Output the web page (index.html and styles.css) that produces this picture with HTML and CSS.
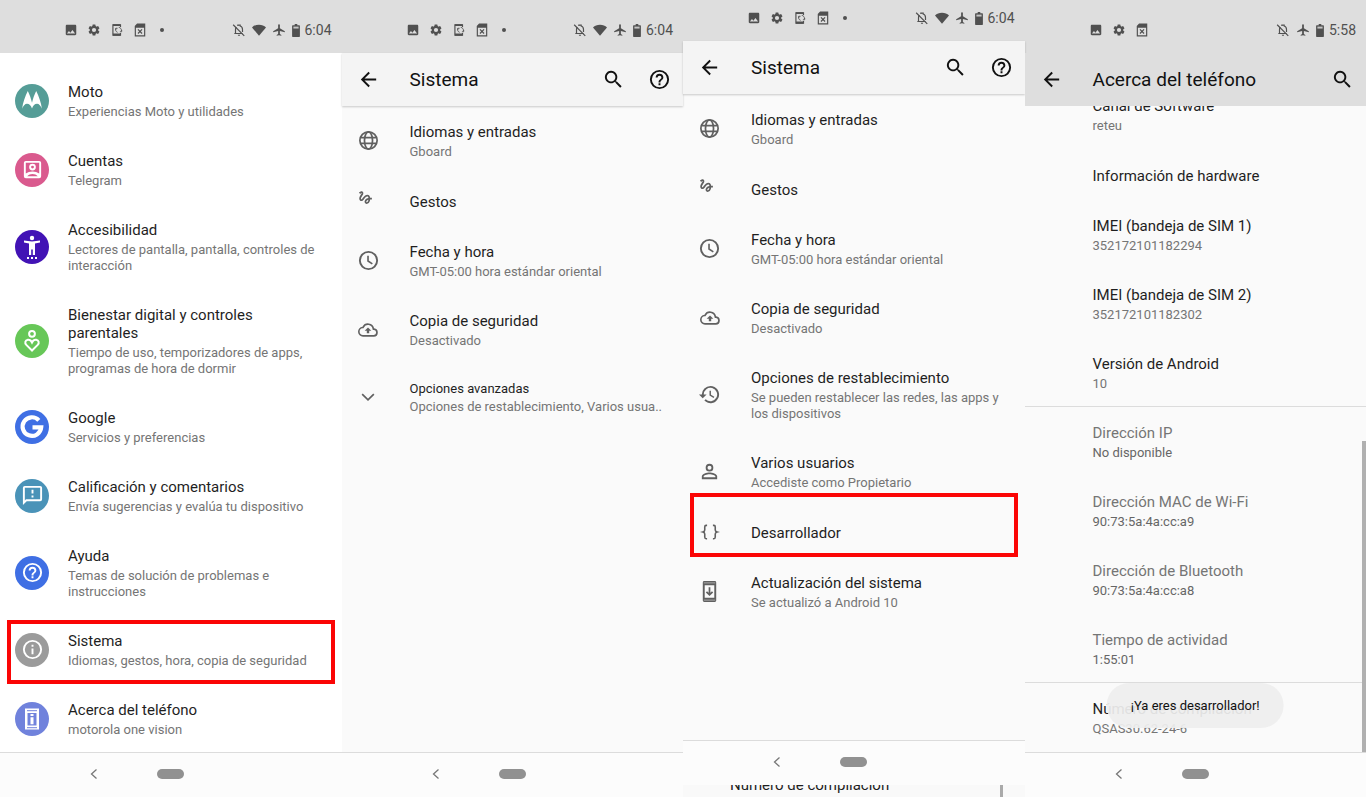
FILE: index.html
```
<!DOCTYPE html>
<html lang="es">
<head>
    <meta charset="UTF-8">
    <meta name="viewport" content="width=device-width, initial-scale=1">
    <title>Ajustes - Sistema</title>
    <link rel="stylesheet" href="styles.css">
</head>
<body>
    <!-- icon set -->
    <svg class="sprite" aria-hidden="true">
        <symbol id="i-image" viewBox="0 0 24 24"><path d="M21 19V5c0-1.100-.9-2-2-2H5c-1.100 0-2 .9-2 2v14c0 1.100.9 2 2 2h14c1.100 0 2-.9 2-2zM8.500 13.500l2.500 3 3.500-4.500 4.500 6H5z"/></symbol>
        <symbol id="i-gear" viewBox="0 0 24 24"><path d="M19.140 12.940c.04-.3.060-.61.060-.94s-.02-.64-.07-.94l2.030-1.580a.49.49 0 0 0 .12-.61l-1.920-3.320a.49.49 0 0 0-.59-.22l-2.390.96c-.5-.38-1.030-.7-1.620-.94l-.36-2.540a.48.48 0 0 0-.48-.41h-3.840c-.24 0-.43.17-.47.41l-.36 2.540c-.59.24-1.130.57-1.620.94l-2.390-.96a.49.49 0 0 0-.59.22L2.740 8.870c-.12.21-.08.47.12.61l2.030 1.580c-.05.3-.09.63-.09.94s.02.64.07.94l-2.030 1.580a.49.49 0 0 0-.12.61l1.920 3.320c.12.22.37.29.59.22l2.390-.96c.5.38 1.030.7 1.620.94l.36 2.540c.05.24.24.41.48.41h3.840c.24 0 .44-.17.47-.41l.36-2.540c.59-.24 1.130-.56 1.620-.94l2.390.96c.22.08.47 0 .59-.22l1.920-3.320a.49.49 0 0 0-.12-.61zM12 15.600a3.600 3.600 0 1 1 0-7.200 3.600 3.600 0 0 1 0 7.200z"/></symbol>
        <symbol id="i-sync-phone" viewBox="0 0 24 24"><path d="M18 7V3H5v18h13v-4" fill="none" stroke="currentColor" stroke-width="2"/><path d="M5 2h13v3H5zM5 18h13v4H5z"/><path d="M10 9a5 5 0 0 0 3 7M10 9v3M10 9h3M15 7.500a5 5 0 0 1 4.500 6M20 15v-3M20 15h-3" fill="none" stroke="currentColor" stroke-width="1.500"/></symbol>
        <symbol id="i-file-x" viewBox="0 0 24 24"><path d="M3 5l4-4h14v22H3zM5 8v13h14V8z" fill-rule="evenodd"/><path d="M8.500 11l7 7M15.500 11l-7 7" stroke="currentColor" stroke-width="2"/></symbol>
        <symbol id="i-bell-off" viewBox="0 0 24 24"><path d="M6 18V11c0-1.600.5-2.900 1.300-4M10 5.200V3.500h4v1.700c2.500.8 4 3 4 5.800v4.500M4 18h14" fill="none" stroke="currentColor" stroke-width="2"/><path d="M10 20h4a2 2 0 0 1-4 0z"/><path d="M2 3l19 19" stroke="currentColor" stroke-width="2"/></symbol>
        <symbol id="i-wifi" viewBox="0 0 24 24"><path d="M12 22L0 7.500C3 4.500 7 3 12 3s9 1.500 12 4.500z"/></symbol>
        <symbol id="i-plane" viewBox="0 0 24 24"><path d="M22 16v-2l-8.500-5V3.500a1.500 1.500 0 0 0-3 0V9L2 14v2l8.500-2.500V19L8 20.500V22l4-1 4 1v-1.500L13.500 19v-5.500z"/></symbol>
        <symbol id="i-battery" viewBox="0 0 12 20"><path d="M4 0h4v2h3a1 1 0 0 1 1 1v16a1 1 0 0 1-1 1H1a1 1 0 0 1-1-1V3a1 1 0 0 1 1-1h3z"/><path d="M2 4h8v3H2z" fill="#c4c4c4"/></symbol>
        <symbol id="i-back" viewBox="0 0 24 24"><path d="M20 11H7.830l5.590-5.590L12 4l-8 8 8 8 1.410-1.410L7.830 13H20z"/></symbol>
        <symbol id="i-search" viewBox="0 0 24 24"><path d="M15.500 14h-.79l-.28-.27a6.500 6.500 0 1 0-.7.700l.27.280v.79l5 4.990L20.490 19zm-6 0a4.500 4.500 0 1 1 0-9 4.500 4.500 0 0 1 0 9z"/></symbol>
        <symbol id="i-help" viewBox="0 0 24 24"><path d="M11 18h2v-2h-2zm1-16a10 10 0 1 0 0 20 10 10 0 0 0 0-20zm0 18a8 8 0 1 1 0-16 8 8 0 0 1 0 16zm0-14a4 4 0 0 0-4 4h2a2 2 0 0 1 4 0c0 2-3 1.750-3 5h2c0-2.250 3-2.500 3-5a4 4 0 0 0-4-4z"/></symbol>
        <symbol id="i-info" viewBox="0 0 24 24"><path d="M11 7h2v2h-2zm0 4h2v6h-2zm1-9a10 10 0 1 0 0 20 10 10 0 0 0 0-20zm0 18a8 8 0 1 1 0-16 8 8 0 0 1 0 16z"/></symbol>
        <symbol id="i-globe" viewBox="0 0 24 24"><g fill="none" stroke="currentColor" stroke-width="1.800"><circle cx="12" cy="12" r="9"/><ellipse cx="12" cy="12" rx="4.200" ry="9"/><path d="M3.500 9h17M3.500 15h17"/></g></symbol>
        <symbol id="i-gesture" viewBox="0 0 24 24"><path transform="scale(.74)" d="M4.590 6.890c.7-.71 1.400-1.350 1.710-1.220.5.200 0 1.030-.3 1.520-.25.42-2.860 3.890-2.860 6.310 0 1.280.48 2.340 1.340 2.980.75.56 1.740.73 2.640.46 1.070-.31 1.950-1.400 3.060-2.770 1.210-1.490 2.830-3.440 4.080-3.440 1.630 0 1.650 1.010 1.760 1.790-3.780.64-5.380 3.670-5.380 5.370 0 1.700 1.440 3.090 3.210 3.090 1.630 0 4.290-1.330 4.690-6.100H21v-2.500h-2.470c-.15-1.650-1.090-4.200-4.030-4.200-2.250 0-4.180 1.910-4.940 2.840-.58.73-2.060 2.480-2.290 2.720-.25.3-.68.84-1.110.84-.45 0-.72-.83-.36-1.920.35-1.090 1.400-2.860 1.850-3.520.78-1.140 1.300-1.920 1.300-3.280C8.950 3.690 7.310 3 6.440 3 5.120 3 3.970 4 3.720 4.250c-.36.36-.66.66-.88.93zm9.290 11.660c-.31 0-.74-.26-.74-.72 0-.6.73-2.200 2.870-2.760-.3 2.690-1.430 3.480-2.130 3.480z"/></symbol>
        <symbol id="i-clock" viewBox="0 0 24 24"><circle cx="12" cy="12" r="9" fill="none" stroke="currentColor" stroke-width="2"/><path d="M11.500 7v5.500l4.500 3" fill="none" stroke="currentColor" stroke-width="1.700"/></symbol>
        <symbol id="i-cloud" viewBox="0 0 24 24"><path d="M19.350 10.040a7.490 7.490 0 0 0-14-2A6 6 0 0 0 6 20h13a5 5 0 0 0 .35-9.960zM19 18H6a4 4 0 0 1-.44-7.980l1.070-.11.5-.95a5.490 5.490 0 0 1 10.260 1.470l.3 1.500 1.530.11A3 3 0 0 1 19 18zM8 13h2.550v3h2.900v-3H16l-4-4z"/></symbol>
        <symbol id="i-chevron" viewBox="0 0 24 24"><path d="M5 8.500l7 7 7-7" fill="none" stroke="currentColor" stroke-width="2"/></symbol>
        <symbol id="i-restore" viewBox="0 0 24 24"><path d="M13 3a9 9 0 0 0-9 9H1l3.890 3.890.07.14L9 12H6a7 7 0 1 1 2.060 4.940l-1.420 1.420A9 9 0 1 0 13 3zm-1 5v5l4.280 2.540.72-1.210-3.500-2.080V8z"/></symbol>
        <symbol id="i-user" viewBox="0 0 24 24"><path d="M12 5.900a2.100 2.100 0 1 1 0 4.200 2.100 2.100 0 0 1 0-4.200m0 9c2.970 0 6.100 1.460 6.100 2.100v1.100H5.900V17c0-.64 3.130-2.100 6.100-2.100M12 4a4 4 0 1 0 0 8 4 4 0 0 0 0-8zm0 9c-2.670 0-8 1.340-8 4v3h16v-3c0-2.660-5.330-4-8-4z"/></symbol>
        <symbol id="i-braces" viewBox="0 0 24 24"><path d="M8.500 4H7.300C6 4 5.700 4.700 5.700 6v3.500c0 1.500-.8 2.100-2.200 2.500 1.400.4 2.200 1 2.200 2.500V18c0 1.300.3 2 1.600 2h1.200M15.500 4h1.200c1.300 0 1.600.7 1.600 2v3.500c0 1.500.8 2.100 2.200 2.500-1.400.4-2.200 1-2.200 2.500V18c0 1.300-.3 2-1.600 2h-1.200" fill="none" stroke="currentColor" stroke-width="1.900"/></symbol>
        <symbol id="i-update" viewBox="0 0 24 24"><path d="M6.500 1h11A1.500 1.500 0 0 1 19 2.500v19a1.500 1.500 0 0 1-1.500 1.500h-11A1.500 1.500 0 0 1 5 21.500v-19A1.500 1.500 0 0 1 6.500 1zM7 5.500v13h10v-13z" fill-rule="evenodd"/><path d="M6 3h12M6 21h12" stroke="#ccc" stroke-width=".7"/><path d="M12 7.500v8M8.800 12.300l3.200 3.200 3.200-3.200" fill="none" stroke="currentColor" stroke-width="1.800"/></symbol>
        <symbol id="i-nav-back" viewBox="0 0 12 12"><path d="M8.500 1.500L3.500 6l5 4.500" fill="none" stroke="currentColor" stroke-width="1.300"/></symbol>
        <symbol id="i-moto" viewBox="0 0 34 34"><path d="M12.800 7c1.700 3.200 3.300 7.800 4.200 11.800.9-4 2.500-8.600 4.200-11.800 2.600 5.200 4.900 11.500 5.700 17.700-1.100-3-2.900-5-4.900-5-2.200 0-4 1.900-5 4.800-1-2.900-2.800-4.800-5-4.800-2 0-3.800 2-4.900 5C7.900 18.500 10.200 12.200 12.800 7z"/></symbol>
        <symbol id="i-account" viewBox="0 0 24 24"><path d="M5 3h14a2 2 0 0 1 2 2v14a2 2 0 0 1-2 2H5a2 2 0 0 1-2-2V5a2 2 0 0 1 2-2zm0 2v11.200c2-1.500 4.200-2.200 7-2.200s5 .7 7 2.200V5zm1.500 14h11c-1.500-1.500-3.300-2.200-5.500-2.200s-4 .7-5.500 2.200z" fill-rule="evenodd"/><circle cx="12" cy="9.500" r="2.500" fill="none" stroke="currentColor" stroke-width="2"/></symbol>
        <symbol id="i-access" viewBox="0 0 34 34"><circle cx="17" cy="8" r="2.200"/><path d="M9 10.500l8 1 8-1v2l-5 .9V25h-2.200v-5.500h-1.600V25H14V13.400l-5-.9zM12 27h2v2h-2zM16 27h2v2h-2zM20 27h2v2h-2z"/></symbol>
        <symbol id="i-wellbeing" viewBox="0 0 34 34"><g fill="none" stroke="currentColor" stroke-width="2"><circle cx="17" cy="9.800" r="2.900"/><path d="M17 26.500l-5.700-5.600c-1.800-1.800-1.200-4.700 1.500-5.100 1.800-.2 3.300.8 4.200 2.700.9-1.900 2.400-2.900 4.200-2.700 2.700.4 3.300 3.300 1.500 5.100z"/></g></symbol>
        <symbol id="i-google" viewBox="0 0 34 34"><path d="M23.800 10.300A9.300 9.300 0 1 0 26.200 17.400H17.500" fill="none" stroke="currentColor" stroke-width="4.200"/></symbol>
        <symbol id="i-feedback" viewBox="0 0 24 24"><path d="M20 2H4a2 2 0 0 0-2 2v18l4-4h14a2 2 0 0 0 2-2V4a2 2 0 0 0-2-2zm0 14H5.170L4 17.170V4h16zM11 12h2v2h-2zm0-6h2v4h-2z"/></symbol>
        <symbol id="i-about" viewBox="0 0 34 34"><path d="M10 6.500h14v21H10zM12.500 11v12.500h9V11z" fill-rule="evenodd"/><path d="M12 8.700h10M12 25.700h10" stroke="#7082dc"/><path d="M15.500 12h3v2h-3zM15.500 15.300h3v7h-3z"/></symbol>
    </svg>

    <main class="screens">

        <!-- Ajustes -->
        <section class="phone phone-main">
            <div class="status">
                <svg class="st-icon"><use href="#i-image"/></svg>
                <svg class="st-icon"><use href="#i-gear"/></svg>
                <svg class="st-icon"><use href="#i-sync-phone"/></svg>
                <svg class="st-icon"><use href="#i-file-x"/></svg>
                <span class="st-dot"></span>
                <div class="st-right">
                    <svg class="st-icon"><use href="#i-bell-off"/></svg>
                    <svg class="st-icon"><use href="#i-wifi"/></svg>
                    <svg class="st-icon"><use href="#i-plane"/></svg>
                    <svg class="st-battery"><use href="#i-battery"/></svg>
                    <span class="st-time">6:04</span>
                </div>
            </div>
            <ul class="list list-scrolled">
                <li><a class="row" href="#">
                    <span class="avatar moto"><svg class="full"><use href="#i-moto"/></svg></span>
                    <span class="text"><span class="title">Moto</span><span class="sub">Experiencias Moto y utilidades</span></span>
                </a></li>
                <li><a class="row" href="#">
                    <span class="avatar accounts"><svg class="icon"><use href="#i-account"/></svg></span>
                    <span class="text"><span class="title">Cuentas</span><span class="sub">Telegram</span></span>
                </a></li>
                <li><a class="row" href="#">
                    <span class="avatar access"><svg class="full"><use href="#i-access"/></svg></span>
                    <span class="text"><span class="title">Accesibilidad</span><span class="sub">Lectores de pantalla, pantalla, controles de interacción</span></span>
                </a></li>
                <li><a class="row" href="#">
                    <span class="avatar wellbeing"><svg class="full"><use href="#i-wellbeing"/></svg></span>
                    <span class="text"><span class="title">Bienestar digital y controles parentales</span><span class="sub">Tiempo de uso, temporizadores de apps, programas de hora de dormir</span></span>
                </a></li>
                <li><a class="row" href="#">
                    <span class="avatar google"><svg class="full"><use href="#i-google"/></svg></span>
                    <span class="text"><span class="title">Google</span><span class="sub">Servicios y preferencias</span></span>
                </a></li>
                <li><a class="row" href="#">
                    <span class="avatar feedback"><svg class="icon"><use href="#i-feedback"/></svg></span>
                    <span class="text"><span class="title">Calificación y comentarios</span><span class="sub">Envía sugerencias y evalúa tu dispositivo</span></span>
                </a></li>
                <li><a class="row" href="#">
                    <span class="avatar help"><svg class="icon"><use href="#i-help"/></svg></span>
                    <span class="text"><span class="title">Ayuda</span><span class="sub">Temas de solución de problemas e instrucciones</span></span>
                </a></li>
                <li><a class="row marked" href="#">
                    <span class="avatar system"><svg class="icon"><use href="#i-info"/></svg></span>
                    <span class="text"><span class="title">Sistema</span><span class="sub">Idiomas, gestos, hora, copia de seguridad</span></span>
                </a></li>
                <li><a class="row" href="#">
                    <span class="avatar about"><svg class="full"><use href="#i-about"/></svg></span>
                    <span class="text"><span class="title">Acerca del teléfono</span><span class="sub">motorola one vision</span></span>
                </a></li>
            </ul>
            <nav class="navbar">
                <button class="nav-back" aria-label="Atrás"><svg><use href="#i-nav-back"/></svg></button>
                <button class="nav-home" aria-label="Inicio"></button>
            </nav>
        </section>

        <!-- Sistema -->
        <section class="phone">
            <div class="status">
                <svg class="st-icon"><use href="#i-image"/></svg>
                <svg class="st-icon"><use href="#i-gear"/></svg>
                <svg class="st-icon"><use href="#i-sync-phone"/></svg>
                <svg class="st-icon"><use href="#i-file-x"/></svg>
                <span class="st-dot"></span>
                <div class="st-right">
                    <svg class="st-icon"><use href="#i-bell-off"/></svg>
                    <svg class="st-icon"><use href="#i-wifi"/></svg>
                    <svg class="st-icon"><use href="#i-plane"/></svg>
                    <svg class="st-battery"><use href="#i-battery"/></svg>
                    <span class="st-time">6:04</span>
                </div>
            </div>
            <header class="appbar">
                <button class="tool tool-back" aria-label="Atrás"><svg class="icon"><use href="#i-back"/></svg></button>
                <h1>Sistema</h1>
                <button class="tool" aria-label="Buscar"><svg class="icon"><use href="#i-search"/></svg></button>
                <button class="tool" aria-label="Ayuda"><svg class="icon"><use href="#i-help"/></svg></button>
            </header>
            <ul class="list">
                <li><a class="row" href="#">
                    <span class="glyph"><svg class="icon"><use href="#i-globe"/></svg></span>
                    <span class="text"><span class="title">Idiomas y entradas</span><span class="sub">Gboard</span></span>
                </a></li>
                <li><a class="row" href="#">
                    <span class="glyph"><svg class="icon"><use href="#i-gesture"/></svg></span>
                    <span class="text"><span class="title">Gestos</span></span>
                </a></li>
                <li><a class="row" href="#">
                    <span class="glyph"><svg class="icon"><use href="#i-clock"/></svg></span>
                    <span class="text"><span class="title">Fecha y hora</span><span class="sub">GMT-05:00 hora estándar oriental</span></span>
                </a></li>
                <li><a class="row" href="#">
                    <span class="glyph"><svg class="icon-small"><use href="#i-cloud"/></svg></span>
                    <span class="text"><span class="title">Copia de seguridad</span><span class="sub">Desactivado</span></span>
                </a></li>
                <li><button class="row row-more">
                    <span class="glyph"><svg class="icon-small"><use href="#i-chevron"/></svg></span>
                    <span class="text"><span class="title">Opciones avanzadas</span><span class="sub">Opciones de restablecimiento, Varios usua..</span></span>
                </button></li>
            </ul>
            <nav class="navbar">
                <button class="nav-back" aria-label="Atrás"><svg><use href="#i-nav-back"/></svg></button>
                <button class="nav-home" aria-label="Inicio"></button>
            </nav>
        </section>

        <!-- Sistema, opciones avanzadas -->
        <section class="phone">
            <div class="status status-short">
                <svg class="st-icon"><use href="#i-image"/></svg>
                <svg class="st-icon"><use href="#i-gear"/></svg>
                <svg class="st-icon"><use href="#i-sync-phone"/></svg>
                <svg class="st-icon"><use href="#i-file-x"/></svg>
                <span class="st-dot"></span>
                <div class="st-right">
                    <svg class="st-icon"><use href="#i-bell-off"/></svg>
                    <svg class="st-icon"><use href="#i-wifi"/></svg>
                    <svg class="st-icon"><use href="#i-plane"/></svg>
                    <svg class="st-battery"><use href="#i-battery"/></svg>
                    <span class="st-time">6:04</span>
                </div>
            </div>
            <header class="appbar">
                <button class="tool tool-back" aria-label="Atrás"><svg class="icon"><use href="#i-back"/></svg></button>
                <h1>Sistema</h1>
                <button class="tool" aria-label="Buscar"><svg class="icon"><use href="#i-search"/></svg></button>
                <button class="tool" aria-label="Ayuda"><svg class="icon"><use href="#i-help"/></svg></button>
            </header>
            <ul class="list">
                <li><a class="row" href="#">
                    <span class="glyph"><svg class="icon"><use href="#i-globe"/></svg></span>
                    <span class="text"><span class="title">Idiomas y entradas</span><span class="sub">Gboard</span></span>
                </a></li>
                <li><a class="row" href="#">
                    <span class="glyph"><svg class="icon"><use href="#i-gesture"/></svg></span>
                    <span class="text"><span class="title">Gestos</span></span>
                </a></li>
                <li><a class="row" href="#">
                    <span class="glyph"><svg class="icon"><use href="#i-clock"/></svg></span>
                    <span class="text"><span class="title">Fecha y hora</span><span class="sub">GMT-05:00 hora estándar oriental</span></span>
                </a></li>
                <li><a class="row" href="#">
                    <span class="glyph"><svg class="icon-small"><use href="#i-cloud"/></svg></span>
                    <span class="text"><span class="title">Copia de seguridad</span><span class="sub">Desactivado</span></span>
                </a></li>
                <li><a class="row" href="#">
                    <span class="glyph"><svg class="icon"><use href="#i-restore"/></svg></span>
                    <span class="text"><span class="title">Opciones de restablecimiento</span><span class="sub">Se pueden restablecer las redes, las apps y los dispositivos</span></span>
                </a></li>
                <li><a class="row" href="#">
                    <span class="glyph"><svg class="icon"><use href="#i-user"/></svg></span>
                    <span class="text"><span class="title">Varios usuarios</span><span class="sub">Accediste como Propietario</span></span>
                </a></li>
                <li><a class="row marked" href="#">
                    <span class="glyph"><svg class="icon-small"><use href="#i-braces"/></svg></span>
                    <span class="text"><span class="title">Desarrollador</span></span>
                </a></li>
                <li><a class="row" href="#">
                    <span class="glyph"><svg class="icon"><use href="#i-update"/></svg></span>
                    <span class="text"><span class="title">Actualización del sistema</span><span class="sub">Se actualizó a Android 10</span></span>
                </a></li>
            </ul>
            <nav class="navbar">
                <button class="nav-back" aria-label="Atrás"><svg><use href="#i-nav-back"/></svg></button>
                <button class="nav-home" aria-label="Inicio"></button>
            </nav>
            <div class="peek">
                <span class="title">Número de compilación</span>
                <span class="peek-bar"></span>
            </div>
        </section>

        <!-- Acerca del teléfono -->
        <section class="phone">
            <div class="status">
                <svg class="st-icon"><use href="#i-image"/></svg>
                <svg class="st-icon"><use href="#i-gear"/></svg>
                <svg class="st-icon"><use href="#i-file-x"/></svg>
                <div class="st-right">
                    <svg class="st-icon"><use href="#i-bell-off"/></svg>
                    <svg class="st-icon"><use href="#i-plane"/></svg>
                    <svg class="st-battery"><use href="#i-battery"/></svg>
                    <span class="st-time">5:58</span>
                </div>
            </div>
            <header class="appbar appbar-dark">
                <button class="tool tool-back" aria-label="Atrás"><svg class="icon"><use href="#i-back"/></svg></button>
                <h1>Acerca del teléfono</h1>
                <button class="tool" aria-label="Buscar"><svg class="icon"><use href="#i-search"/></svg></button>
            </header>
            <ul class="list list-bottom">
                <li class="row row-plain"><span class="text"><span class="title">Canal de Software</span><span class="sub">reteu</span></span></li>
                <li class="row row-plain"><span class="text"><span class="title">Información de hardware</span></span></li>
                <li class="row row-plain"><span class="text"><span class="title">IMEI (bandeja de SIM 1)</span><span class="sub">352172101182294</span></span></li>
                <li class="row row-plain"><span class="text"><span class="title">IMEI (bandeja de SIM 2)</span><span class="sub">352172101182302</span></span></li>
                <li class="row row-plain"><span class="text"><span class="title">Versión de Android</span><span class="sub">10</span></span></li>
                <li class="row row-plain row-off divided"><span class="text"><span class="title">Dirección IP</span><span class="sub">No disponible</span></span></li>
                <li class="row row-plain row-off"><span class="text"><span class="title">Dirección MAC de Wi-Fi</span><span class="sub">90:73:5a:4a:cc:a9</span></span></li>
                <li class="row row-plain row-off"><span class="text"><span class="title">Dirección de Bluetooth</span><span class="sub">90:73:5a:4a:cc:a8</span></span></li>
                <li class="row row-plain row-off"><span class="text"><span class="title">Tiempo de actividad</span><span class="sub">1:55:01</span></span></li>
                <li class="row row-plain divided"><span class="text"><span class="title">Número de compilación</span><span class="sub">QSAS30.62-24-6</span></span></li>
            </ul>
            <span class="scrollbar"></span>
            <div class="toast" role="status">¡Ya eres desarrollador!</div>
            <nav class="navbar">
                <button class="nav-back" aria-label="Atrás"><svg><use href="#i-nav-back"/></svg></button>
                <button class="nav-home" aria-label="Inicio"></button>
            </nav>
        </section>

    </main>
</body>
</html>
```
FILE: styles.css
```
*,
*::after {
    box-sizing: border-box;
}

body {
    margin: 0;
    font-family: Roboto, "Liberation Sans", sans-serif;
    background-color: #fafafa;
    color: #1f1f1f;
}

button {
    padding: 0;
    border: none;
    background: none;
    font-family: inherit;
    color: inherit;
    text-align: left;
    cursor: pointer;
}

a {
    color: inherit;
    text-decoration: none;
}

svg {
    display: block;
    fill: currentColor;
}

.sprite {
    position: absolute;
    width: 0;
    height: 0;
}

.screens {
    display: flex;
    height: 100vh;
}

.phone {
    position: relative;
    flex: 1;
    min-width: 0;
    display: flex;
    flex-direction: column;
    background-color: #fafafa;
}

.phone-main {
    background-color: #fff;
}

/* status bar */
.status {
    flex: none;
    display: flex;
    align-items: center;
    gap: 9px;
    padding: 23px 10px 16px 64px;
    background-color: #dedede;
    color: #505050;
}

.status-short {
    padding-top: 11px;
}

.st-icon {
    width: 14px;
    height: 14px;
}

.st-dot {
    width: 4px;
    height: 4px;
    margin-left: 4px;
    border-radius: 50%;
    background-color: #505050;
}

.st-right {
    display: flex;
    align-items: center;
    gap: 6px;
    margin-left: auto;
}

.st-battery {
    width: 8px;
    height: 13px;
    margin-right: -1px;
}

.st-time {
    font-size: 14px;
    line-height: 14px;
}

/* title bar */
.appbar {
    z-index: 1;
    flex: none;
    display: flex;
    align-items: center;
    height: 53px;
    padding-right: 12px;
    background-color: #f4f4f4;
    box-shadow: 0 1px 2px rgba(0, 0, 0, 0.2);
    color: #111;
}

.appbar-dark {
    background-color: #dedede;
    box-shadow: none;
}

.appbar h1 {
    flex: 1;
    margin: 0;
    font-size: 19px;
    font-weight: 400;
    line-height: 22px;
}

.tool + .tool {
    margin-left: 23px;
}

.tool-back {
    width: 53px;
    margin-right: 15px;
}

.tool-back .icon {
    margin: 0 auto;
}

.icon {
    width: 23px;
    height: 23px;
}

.icon-small {
    width: 20px;
    height: 20px;
}

/* lists */
.list {
    flex: 1;
    min-height: 0;
    margin: 0;
    padding: 0;
    list-style: none;
    overflow: hidden;
}

.list-scrolled {
    padding-top: 13px;
}

.list-bottom {
    display: flex;
    flex-direction: column;
    justify-content: flex-end;
}

.row {
    position: relative;
    flex: none;
    display: flex;
    align-items: center;
    width: 100%;
    min-height: 51px;
    padding: 17px 18px 15px 0;
}

.row-plain {
    padding-left: 68px;
}

.row-more {
    padding-top: 16px;
}

.glyph {
    flex: none;
    display: flex;
    justify-content: center;
    width: 53px;
    margin: -5px 15px -3px 0;
    color: #606060;
}

.avatar {
    flex: none;
    display: flex;
    align-items: center;
    justify-content: center;
    width: 34px;
    height: 34px;
    margin: 0 19px 2px 15px;
    border-radius: 50%;
    color: #fff;
}

.full {
    width: 34px;
    height: 34px;
}

.moto { background-color: #559d97; }
.accounts { background-color: #da5a8e; }
.access { background-color: #4213b5; }
.wellbeing { background-color: #67c758; }
.google { background-color: #3f6fe4; }
.feedback { background-color: #4a93b8; }
.help { background-color: #3f6fe4; }
.system { background-color: #9b9b9b; }
.about { background-color: #7082dc; }

.text {
    flex: 1;
    min-width: 0;
}

.title {
    display: block;
    font-size: 15px;
    line-height: 18px;
}

.sub {
    display: block;
    margin-top: 3px;
    font-size: 13px;
    line-height: 16px;
    color: #757575;
}

.row-more .title {
    font-size: 13px;
}

.row-more .sub {
    margin-top: 1px;
    white-space: nowrap;
}

.row-off .title {
    color: #757575;
}

.row-off .sub {
    color: #666;
}

.divided {
    box-shadow: 0 -1px 0 #dcdcdc;
}

/* red frame round the option to tap */
.marked::after {
    content: "";
    position: absolute;
    left: 7px;
    right: 7px;
    bottom: 0;
    height: 64px;
    border: 4px solid #fb0505;
}

/* navigation bar */
.navbar {
    flex: none;
    display: grid;
    grid-template-columns: 1fr 27px 1fr;
    align-items: center;
    height: 45px;
    padding-bottom: 2px;
    border-top: 1px solid #dcdcdc;
    background-color: #fcfcfc;
    color: #777;
}

.nav-back {
    justify-self: end;
    margin-right: 57px;
}

.nav-back svg {
    width: 12px;
    height: 12px;
}

.nav-home {
    height: 10px;
    border-radius: 5px;
    background-color: #919191;
}

.peek {
    flex: none;
    display: flex;
    align-items: flex-end;
    justify-content: space-between;
    height: 12px;
    padding: 0 22px 3px 47px;
    overflow: hidden;
    background-color: #f9f9f9;
}

.peek-bar {
    align-self: flex-start;
    flex: none;
    width: 3px;
    height: 12px;
    background-color: #aaa;
}

.scrollbar {
    position: absolute;
    right: 0;
    bottom: 45px;
    width: 4px;
    height: 311px;
    background-color: #b0b0b0;
}

.toast {
    position: absolute;
    bottom: 69px;
    left: 50%;
    transform: translateX(-50%);
    padding: 14px 24px 13px;
    border-radius: 23px;
    background-color: rgba(238, 238, 238, 0.93);
    color: #111;
    font-size: 13px;
    line-height: 18px;
    white-space: nowrap;
}
```
